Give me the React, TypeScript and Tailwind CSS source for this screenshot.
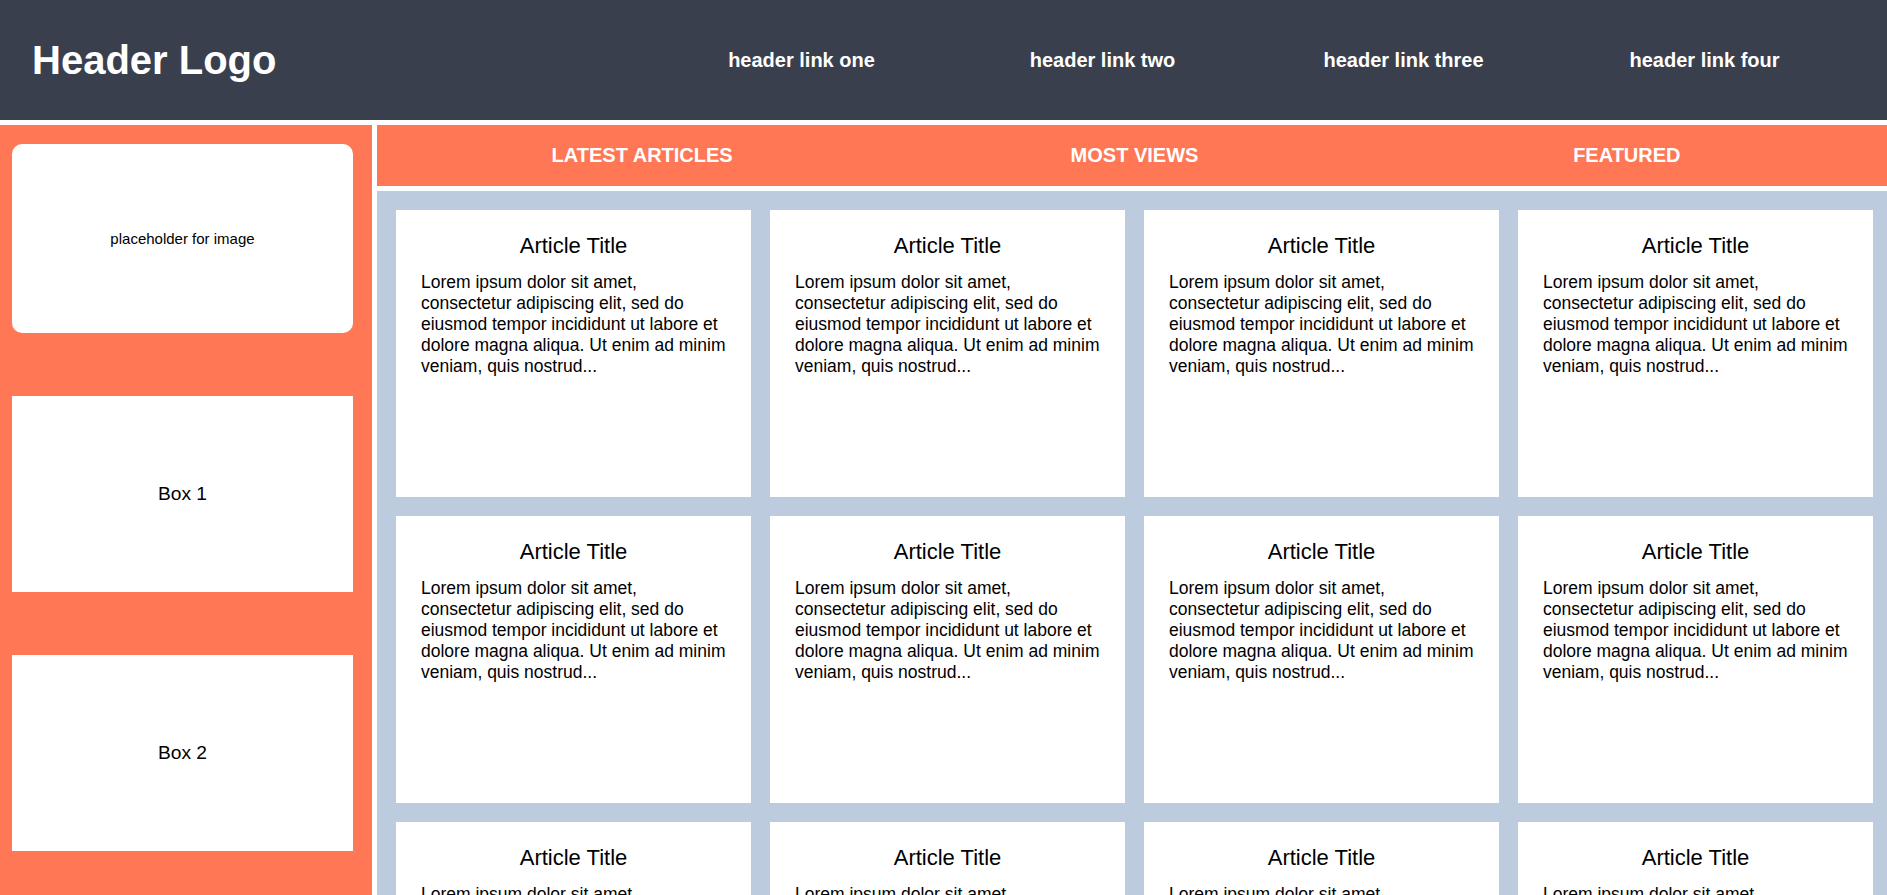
export default function App() {
  const links = ["header link one", "header link two", "header link three", "header link four"];
  const tabs = ["LATEST ARTICLES", "MOST VIEWS", "FEATURED"];
  const articles = Array.from({ length: 12 }, (_, i) => i);

  return (
    <div className="min-h-screen bg-white font-['Liberation_Sans',Arial,sans-serif] text-black">
      <header className="flex h-[120px] items-center justify-between bg-[#3a3f4e] px-8 text-white">
        <h1 className="text-[40px] font-bold leading-none">Header Logo</h1>
        <nav className="grid w-[1204px] grid-cols-4 text-center text-[20px] font-bold">
          {links.map((l) => (
            <a key={l} href="#">
              {l}
            </a>
          ))}
        </nav>
      </header>

      <div className="mt-[5px] flex gap-[5px]">
        <aside className="flex w-[372px] shrink-0 flex-col gap-[63px] bg-[#ff7755] pl-3 pr-[19px] pt-[19px]">
          <div className="flex h-[189px] items-center justify-center rounded-[10px] bg-white pt-px text-[15px]">
            placeholder for image
          </div>
          <div className="flex h-[196px] items-center justify-center bg-white text-[19.2px]">
            Box 1
          </div>
          <div className="flex h-[196px] items-center justify-center bg-white text-[19.2px]">
            Box 2
          </div>
        </aside>

        <main className="flex flex-1 flex-col gap-[5px]">
          <div className="grid h-[61px] grid-cols-3 items-center bg-[#ff7755] pb-[2px] pl-[19px] pr-[14px] text-center text-[20px] font-bold text-white">
            {tabs.map((t) => (
              <span key={t}>{t}</span>
            ))}
          </div>

          <section className="grid grid-cols-4 gap-[19px] bg-[#bccbde] py-[19px] pl-[19px] pr-[14px]">
            {articles.map((i) => (
              <article key={i} className="h-[287px] bg-white px-[25px] pt-[23px]">
                <h2 className="text-center text-[22px] leading-[26px]">Article Title</h2>
                <p className="mr-[-5px] mt-[13px] text-[17.5px] leading-[21px]">
                  Lorem ipsum dolor sit amet, consectetur adipiscing elit, sed do eiusmod tempor
                  incididunt ut labore et dolore magna aliqua. Ut enim ad minim veniam, quis
                  nostrud...
                </p>
              </article>
            ))}
          </section>
        </main>
      </div>
    </div>
  );
}
